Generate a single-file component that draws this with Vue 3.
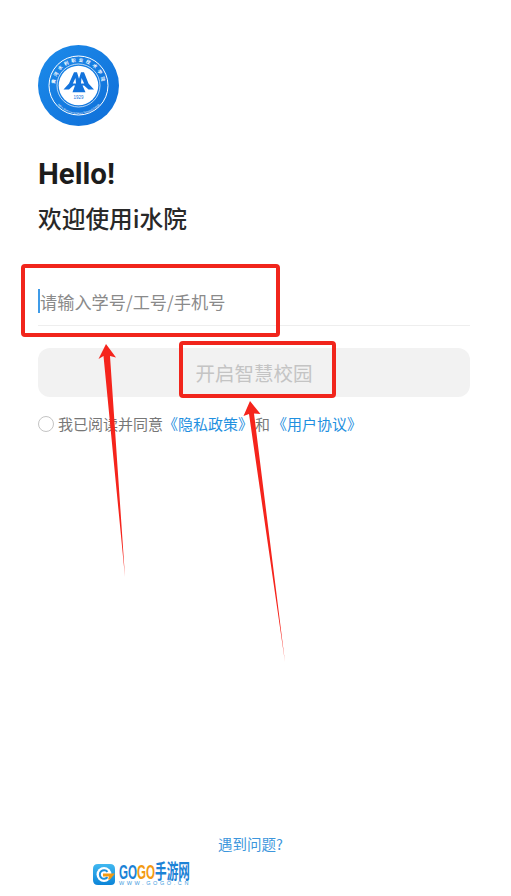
<script setup>
const ringTop = "黄河水利职业技术学院"
const ringBottom = "Yellow River Conservancy Technical College"
</script>

<template>
  <main class="page">
    <section class="intro">
      <svg class="logo" viewBox="0 0 81 81">
        <defs>
          <linearGradient id="logoBlue" x1="0" y1="0" x2="1" y2="1">
            <stop offset="0" stop-color="#1c8bea" />
            <stop offset="1" stop-color="#0f6ed8" />
          </linearGradient>
          <path id="arcTop" d="M18 47a23.500 23.500 0 1 1 45 0" />
          <path id="arcBottom" d="M14 50a28 28 0 0 0 53 0" />
        </defs>
        <circle cx="40.5" cy="40.5" r="40.500" fill="url(#logoBlue)" />
        <circle cx="40.5" cy="40.5" r="29.500" fill="none" stroke="#fff" stroke-width="1" />
        <circle cx="40.5" cy="40.5" r="21.500" fill="none" stroke="#fff" stroke-width=".7" />
        <circle cx="40.5" cy="40.5" r="19.800" fill="#fff" />
        <text class="ring-cn"><textPath href="#arcTop" startOffset="50%" text-anchor="middle">{{ ringTop }}</textPath></text>
        <text class="ring-en"><textPath href="#arcBottom" startOffset="50%" text-anchor="middle">{{ ringBottom }}</textPath></text>
        <path d="M36 27.300h3l2 6.500 2-6.500h3l4.500 11.200 5.500 6h-5.500l-4.500-3.900h-1.500L47.500 47.300h-13L37 40.600h-1.500L31 44.500h-5.500l5.500-6z" fill="#1273dc" />
        <path d="M34.800 38.500l2.700-5.500.5 5.500zM46.200 38.500l-2.700-5.500-.5 5.500z" fill="#fff" />
        <text class="year" x="40.5" y="53.500" text-anchor="middle">1929</text>
      </svg>
      <h1>Hello!</h1>
      <h2>欢迎使用i水院</h2>
    </section>

    <form class="login" @submit.prevent>
      <div class="field">
        <span class="caret"></span>
        <span class="placeholder">请输入学号/工号/手机号</span>
      </div>
      <button class="submit" type="button">开启智慧校园</button>
      <div class="agree">
        <span class="radio"></span>
        <span>我已阅读并同意</span>
        <a class="link">《隐私政策》</a>
        <span class="and">和</span>
        <a class="link">《用户协议》</a>
      </div>
    </form>

    <a class="help">遇到问题?</a>

    <div class="watermark">
      <svg class="wm-icon" viewBox="0 0 22 21">
        <defs>
          <linearGradient id="wmBlue" x1="0" y1="0" x2="0" y2="1">
            <stop offset="0" stop-color="#41b8f0" />
            <stop offset="1" stop-color="#0b84d8" />
          </linearGradient>
        </defs>
        <path d="M5 0h12q5 0 5 5v12q0 4-4 4H5q-5 0-5-5V5q0-5 5-5z" fill="url(#wmBlue)" />
        <circle cx="11" cy="10.500" r="7.500" fill="#fff" />
        <path d="M14.500 7.800a4.300 4.300 0 1 0 0 5.400" fill="none" stroke="#1c8fdc" stroke-width="2" />
        <path d="M10 9.500h12l-5 6h-2l1-3h-6z" fill="#f39a12" />
      </svg>
      <div class="wm-text">
        <div class="wm-name"><span class="wm-blue">GO</span><span class="wm-orange">GO</span><span class="wm-blue">手游网</span></div>
        <div class="wm-url">WWW.GOGO.CN</div>
      </div>
    </div>

    <!-- annotations drawn over the screenshot -->
    <div class="mark mark-input"></div>
    <div class="mark mark-button"></div>
    <svg class="arrows" viewBox="0 0 511 896">
      <path d="M106 344L116 357.500 110 356 125 577 103.500 356 98.500 359z" fill="#f5241c" />
      <path d="M250 401L260.500 414 254 413.500 285 662 249 414 243.500 416z" fill="#f5241c" />
    </svg>
  </main>
</template>

<style scoped>
.page {
  position: relative;
  width: 511px;
  height: 896px;
  overflow: hidden;
  background: #fff;
  box-sizing: border-box;
  padding: 45px 41px 0 38px;
  display: flex;
  flex-direction: column;
  font-family: "Noto Sans CJK SC", "Noto Sans", sans-serif;
}

.intro {
  display: flex;
  flex-direction: column;
  align-items: flex-start;
}

.logo {
  width: 81px;
  height: 81px;
  display: block;
}

.ring-cn {
  font-size: 4.500px;
  font-weight: 700;
  letter-spacing: 2.600px;
  fill: #fff;
}

.ring-en {
  font-size: 2.400px;
  fill: #fff;
  font-family: "Liberation Sans", sans-serif;
}

.year {
  font-size: 4.500px;
  fill: #1273dc;
  font-family: "Liberation Sans", sans-serif;
}

h1 {
  margin: 29px 0 0;
  font-family: Roboto, sans-serif;
  font-size: 29.500px;
  line-height: 38px;
  font-weight: 700;
  color: #1c1c1c;
}

h2 {
  margin: 8px 0 0;
  font-size: 23.700px;
  line-height: 34px;
  font-weight: 500;
  color: #282828;
}

.login {
  margin-top: 36px;
  display: flex;
  flex-direction: column;
}

.field {
  box-sizing: border-box;
  height: 55px;
  padding-top: 6px;
  border-bottom: 1px solid #eeeeee;
  display: flex;
  align-items: center;
}

.caret {
  width: 2px;
  height: 24px;
  background: #3f9be8;
  flex: none;
}

.placeholder {
  font-size: 17.200px;
  color: #8a8a8a;
}

.submit {
  margin-top: 22px;
  height: 49px;
  width: 432px;
  border: none;
  border-radius: 12px;
  background: #f2f2f2;
  color: #c4c4c4;
  font-family: inherit;
  font-size: 19.500px;
  padding: 0;
}

.agree {
  margin-top: 19px;
  display: flex;
  align-items: center;
  font-size: 15px;
  line-height: 16px;
  color: #777;
}

.radio {
  width: 14px;
  height: 14px;
  border: 1px solid #c4c4c4;
  border-radius: 50%;
  margin-right: 4px;
}

.link {
  color: #1f90e0;
}

.and {
  margin: 0 2px;
}

.help {
  position: absolute;
  left: 218px;
  top: 833px;
  font-size: 14.500px;
  line-height: 22px;
  color: #3d96dc;
}

.watermark {
  position: absolute;
  left: 93px;
  top: 864px;
  display: flex;
  gap: 4px;
}

.wm-icon {
  width: 22px;
  height: 21px;
}

.wm-name {
  font-family: "Liberation Sans", "Noto Sans CJK SC", sans-serif;
  font-size: 20px;
  line-height: 16px;
  font-weight: 700;
  white-space: nowrap;
  transform: scaleX(0.58);
  transform-origin: left center;
}

.wm-blue {
  color: #1b82d6;
}

.wm-orange {
  color: #f39a12;
}

.wm-url {
  font-family: "Liberation Sans", sans-serif;
  font-size: 5.500px;
  line-height: 6px;
  letter-spacing: 2.600px;
  color: #3d9ae0;
  white-space: nowrap;
}

.mark {
  position: absolute;
  box-sizing: border-box;
  border: 4px solid #f1251c;
  border-radius: 4px;
}

.mark-input {
  left: 21px;
  top: 264px;
  width: 259px;
  height: 73px;
}

.mark-button {
  left: 179px;
  top: 341px;
  width: 157px;
  height: 57px;
}

.arrows {
  position: absolute;
  inset: 0;
  width: 511px;
  height: 896px;
  pointer-events: none;
}
</style>
